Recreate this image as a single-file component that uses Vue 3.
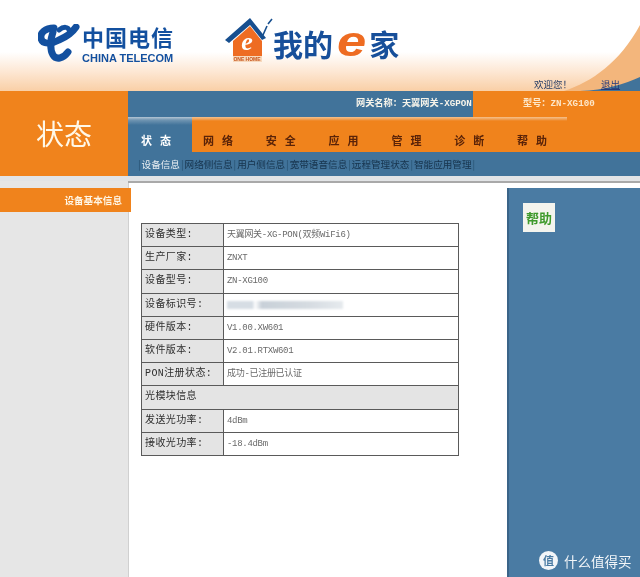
<script setup>
const tabs = ['状 态', '网 络', '安 全', '应 用', '管 理', '诊 断', '帮 助']
const subs = ['设备信息', '网络侧信息', '用户侧信息', '宽带语音信息', '远程管理状态', '智能应用管理']
const rows = [
  { k: '设备类型:', v: '天翼网关-XG-PON(双频WiFi6)' },
  { k: '生产厂家:', v: 'ZNXT' },
  { k: '设备型号:', v: 'ZN-XG100' },
  { k: '设备标识号:', v: '', masked: true },
  { k: '硬件版本:', v: 'V1.00.XW601' },
  { k: '软件版本:', v: 'V2.01.RTXW601' },
  { k: 'PON注册状态:', v: '成功-已注册已认证' },
  { k: '光模块信息', section: true },
  { k: '发送光功率:', v: '4dBm' },
  { k: '接收光功率:', v: '-18.4dBm' }
]
</script>

<template>
  <div class="page">
    <header class="top">
      <svg class="swoosh" width="160" height="91" viewBox="0 0 160 91">
        <path d="M84 91 C112 82 140 62 160 25 L160 91 Z" fill="#f3b67c" />
        <path d="M100 91 C125 90 145 84 160 77 L160 91 Z" fill="#41739a" />
      </svg>
      <div class="brand">
        <svg class="tele-mark" width="42" height="38" viewBox="0 0 42 38">
          <path d="M16 4 C7 4 2 9 3 14 C4 21 14 20 21 16 C28 13 34 9 38 3" fill="none" stroke="#13509f" stroke-width="7" stroke-linecap="round" />
          <path d="M15 8 C12 16 12 26 15 31 C18 36 25 35 30 28" fill="none" stroke="#13509f" stroke-width="7" stroke-linecap="round" />
          <path d="M21 6 C26 2 30 3 31 6" fill="none" stroke="#13509f" stroke-width="5" stroke-linecap="round" />
        </svg>
        <div class="tele-text">
          <div class="tele-cn">中国电信</div>
          <div class="tele-en">CHINA TELECOM</div>
        </div>
      </div>
      <div class="home">
        <svg class="house" width="48" height="48" viewBox="0 0 48 48">
          <path d="M0 22 L25 0 L41 20 L37 22 L25 7 L4 25 Z" fill="#174f8f" />
          <path d="M8 23 L25 8 L37 23 L37 38 L8 38 Z" fill="#ee6c22" />
          <path d="M8 38 H37 V44 H8 Z" fill="#f7d9bd" />
          <path d="M38 17 L42 8 M43 6 L47 1" stroke="#174f8f" stroke-width="1.6" fill="none" />
          <text x="22" y="32" text-anchor="middle" class="house-e">e</text>
          <text x="22" y="43" text-anchor="middle" class="house-txt">ONE HOME</text>
        </svg>
        <div class="home-text">我的<span class="home-e">e</span>家</div>
      </div>
      <div class="welcome"><span>欢迎您！</span><a class="logout">退出</a></div>
    </header>

    <section class="band">
      <div class="section-title">状态</div>
      <div class="band-main">
        <div class="info">
          <div class="info-blue"><span>网关名称：天翼网关-XGPON</span></div>
          <div class="info-orange"><span>型号：ZN-XG100</span></div>
        </div>
        <nav class="tabs">
          <div v-for="(t, i) in tabs" :key="t" class="tab" :class="{ active: i === 0 }">{{ t }}</div>
        </nav>
        <div class="subs">
          <span class="sep">|</span>
          <template v-for="(s, i) in subs" :key="s">
            <span :class="{ cur: i === 0 }">{{ s }}</span><span class="sep">|</span>
          </template>
        </div>
      </div>
    </section>

    <div class="strip"></div>

    <main class="body">
      <aside class="side">
        <div class="side-item">设备基本信息</div>
      </aside>
      <div class="work">
        <div class="content">
          <table class="grid">
            <tbody>
              <tr v-for="r in rows" :key="r.k">
                <td v-if="r.section" colspan="2" class="label">{{ r.k }}</td>
                <template v-else>
                  <td class="label">{{ r.k }}</td>
                  <td class="value">
                    <span v-if="r.masked" class="mask"></span>
                    <template v-else>{{ r.v }}</template>
                  </td>
                </template>
              </tr>
            </tbody>
          </table>
        </div>
        <aside class="help">
          <div class="help-btn">帮助</div>
          <div class="mark">
            <span class="mark-ico">值</span>
            <span>什么值得买</span>
          </div>
        </aside>
      </div>
    </main>
  </div>
</template>

<style>
html, body { margin: 0; background: #fff; }
</style>

<style scoped>
.page {
  width: 640px;
  height: 577px;
  overflow: hidden;
  display: flex;
  flex-direction: column;
  font-family: "Liberation Serif", "Noto Sans CJK SC", serif;
  filter: blur(0.35px);
}
.top {
  position: relative;
  height: 91px;
  flex: none;
  display: flex;
  align-items: flex-start;
  box-sizing: border-box;
  padding: 22px 0 0 38px;
  background: linear-gradient(#fff 0, #fff 52px, #fde7d3 72px, #f9cfa6 91px);
}
.swoosh { position: absolute; right: 0; top: 0; }
.brand { display: flex; gap: 2px; align-items: flex-start; position: relative; width: 135px; flex: none; }
.tele-mark { margin-top: 2px; flex: none; }
.tele-cn {
  font: 700 22px/28px "Noto Sans CJK SC", sans-serif;
  color: #13509f;
  letter-spacing: 1px;
  white-space: nowrap;
}
.tele-en {
  font: 700 11px/13px "Liberation Sans", sans-serif;
  color: #13509f;
  margin-top: 2px;
  white-space: nowrap;
}
.home { display: flex; align-items: flex-start; margin: -4px 0 0 52px; position: relative; flex: none; }
.house-e { font: italic 700 26px "Liberation Serif", serif; fill: #fff; }
.house-txt { font: 700 5px "Liberation Sans", sans-serif; fill: #c8541a; }
.home-text {
  font: 700 30px/36px "Noto Sans CJK SC", sans-serif;
  color: #174f9a;
  margin: 6px 0 0 0;
  white-space: nowrap;
}
.home-e {
  display: inline-block;
  font: italic 700 42px/36px "Liberation Sans", sans-serif;
  color: #ee6c22;
  margin: 0 6px 0 7px;
  transform: scaleX(1.25);
}
.welcome {
  position: absolute;
  left: 534px;
  top: 79px;
  display: flex;
  gap: 29px;
  font: 9.5px/12px "Liberation Serif", "Noto Sans CJK SC", serif;
  color: #2a3f66;
  white-space: nowrap;
}
.logout { color: #25397a; text-decoration: underline; }
.band { display: flex; height: 85px; flex: none; }
.section-title {
  width: 128px;
  flex: none;
  background: #f0831c;
  color: #fff8e8;
  font: 400 28px/85px "Noto Sans CJK SC", serif;
  text-align: center;
}
.band-main { flex: 1; display: flex; flex-direction: column; background: #41739a; }
.info { height: 26px; display: flex; flex: none; color: #f7f4ea; font: 700 9.2px/26px "Liberation Mono", "Noto Sans CJK SC", monospace; }
.info-blue { width: 345px; box-sizing: border-box; padding-left: 228px; white-space: nowrap; }
.info-orange { flex: 1; background: #f0831c; padding-left: 50px; white-space: nowrap; color: #fde7c9; }
.tabs {
  height: 35px;
  flex: none;
  display: flex;
  background: linear-gradient(#f6c08a 0, #f0a45c 2px, #f0831c 4px) no-repeat 0 0 / 439px 4px, #f0831c;
}
.tab {
  width: 62.8px;
  flex: none;
  box-sizing: border-box;
  padding: 12.5px 0 0 11px;
  font: 700 11px/20px "Noto Sans CJK SC", serif;
  color: #5a2308;
  word-spacing: 5.5px;
  white-space: nowrap;
}
.tab.active {
  width: 64px;
  padding-left: 13px;
  color: #fff;
  background: linear-gradient(#b4c6d4 0, #7095b2 3px, #41739a 8px);
}
.subs {
  flex: 1;
  display: flex;
  align-items: center;
  padding-left: 9px;
  font: 9.6px/24px "Noto Sans CJK SC", serif;
  color: #16334c;
  white-space: nowrap;
}
.subs .cur { color: #e8eef2; }
.sep { color: #27506f; margin: 0 1px; }
.strip { height: 5px; flex: none; background: #e2e4e6; }
.body { flex: 1; display: flex; min-height: 0; background: #fff; }
.side {
  width: 128px;
  flex: none;
  background: #e6e6e6;
  padding-top: 7px;
  position: relative;
  z-index: 1;
}
.side-item {
  width: 131px;
  height: 24px;
  box-sizing: border-box;
  background: #f0831c;
  color: #fff6e6;
  font: 700 9.6px/24px "Noto Sans CJK SC", serif;
  text-align: right;
  padding-right: 9px;
}
.work {
  flex: 1;
  display: flex;
  border-top: 2px solid #a9a9a9;
  min-width: 0;
}
.content {
  flex: 1;
  background: #fff;
  border-left: 1px solid #d0d0d0;
  box-sizing: border-box;
  padding: 40px 0 0 12px;
}
.grid {
  border-collapse: collapse;
  width: 318px;
  table-layout: fixed;
}
.grid td {
  border: 1px solid #5a5a5a;
  height: 23.2px;
  box-sizing: border-box;
  padding: 0 0 0 3px;
  white-space: nowrap;
}
.label {
  width: 82px;
  background: #e4e4e4;
  color: #2e2e2e;
  font: 10px/12px "Liberation Mono", "Noto Sans CJK SC", monospace;
  letter-spacing: 0.4px;
}
.value {
  color: #6a6a6a;
  font: 400 9px/12px "Liberation Mono", "Noto Sans CJK SC", monospace;
  letter-spacing: -0.3px;
}
.mask {
  display: block;
  width: 116px;
  height: 8px;
  background: linear-gradient(90deg, #d6dde4 0 22%, #fff 24%, #c8d0d8 30%, #d5dbe1 70%, #e6eaee 100%);
  filter: blur(1px);
}
.help {
  width: 133px;
  flex: none;
  margin-top: 5px;
  box-sizing: border-box;
  background: #4a7ba3;
  border-left: 2px solid #3a6488;
  padding: 15px 0 0 14px;
  display: flex;
  flex-direction: column;
  position: relative;
}
.help-btn {
  width: 32px;
  height: 29px;
  background: #f4f4ee;
  color: #3f9a2c;
  font: 700 13px/29px "Noto Sans CJK SC", serif;
  text-align: center;
}
.mark {
  position: absolute;
  left: 30px;
  bottom: 7px;
  display: flex;
  align-items: center;
  gap: 6px;
  color: #f2f5f8;
  font: 400 13.5px/18px "Noto Sans CJK SC", sans-serif;
  white-space: nowrap;
}
.mark-ico {
  width: 19px;
  height: 19px;
  border-radius: 50%;
  background: #f2f5f8;
  color: #4a7ba3;
  font: 700 11px/19px "Noto Sans CJK SC", sans-serif;
  text-align: center;
}
</style>
